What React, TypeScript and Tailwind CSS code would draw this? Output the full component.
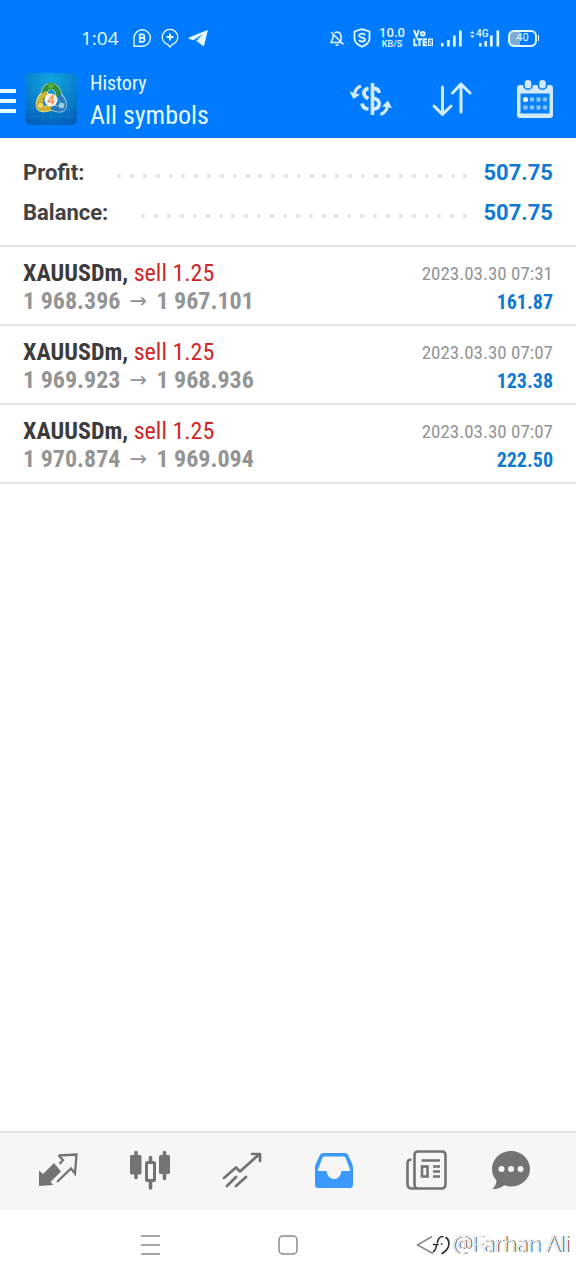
import React from 'react';

const condensed = "font-['Roboto_Condensed','Liberation_Sans_Narrow',Roboto,sans-serif]";

const deals = [
  { symbol: 'XAUUSDm', side: 'sell 1.25', open: '1 968.396', close: '1 967.101', time: '2023.03.30 07:31', profit: '161.87' },
  { symbol: 'XAUUSDm', side: 'sell 1.25', open: '1 969.923', close: '1 968.936', time: '2023.03.30 07:07', profit: '123.38' },
  { symbol: 'XAUUSDm', side: 'sell 1.25', open: '1 970.874', close: '1 969.094', time: '2023.03.30 07:07', profit: '222.50' },
];

function StatusBar() {
  return (
    <div className="flex h-[60px] items-center justify-between pt-4 pr-[37px] pl-[81px]">
      <div className="flex items-center gap-[9px]">
        <span className="mr-1 font-['Open_Sans',sans-serif] text-[19px] leading-6">1:04</span>
        <svg width="20" height="20" viewBox="0 0 20 20" fill="none" stroke="currentColor" strokeWidth="1.4">
          <path d="M2 18.2V10a8.2 8.2 0 1 1 8.2 8.2Z" strokeLinejoin="round" />
          <path d="M7.8 6.4v7.4h3.1a2 2 0 0 0 .3-3.900 1.800 1.800 0 0 0-.6-3.500ZM7.800 9.900h3" strokeWidth="1.8" />
        </svg>
        <svg width="18" height="20" viewBox="0 0 18 20" fill="none" stroke="currentColor" strokeWidth="1.3">
          <path d="M6.8 16.5A7.7 7.7 0 1 1 11.200 16.500L9 19Z" strokeLinejoin="round" />
          <path d="M9 5.600v6.800M5.600 9h6.800" strokeWidth="1.900" />
        </svg>
        <svg width="20" height="18" viewBox="0 0 20 18" fill="currentColor">
          <path d="M19 1.300.8 8.600c-.6.3-.5.900.1 1.100l4.700 1.500L15.300 4.600 8.300 11.800l.1.200 6.400 4.800c.6.400 1.200.2 1.400-.6L19.600 2c.1-.6-.1-.9-.6-.7Z" />
        </svg>
      </div>
      <div className="flex items-center gap-2">
        <svg className="mr-px" width="14" height="16" viewBox="0 0 14 16" fill="none" stroke="currentColor" strokeWidth="1.500" strokeLinecap="round">
          <path d="M5 2.500a4 4 0 0 1 6 3.500v4M3.300 5.200 3 8 1 12.500h9.500M6 14.900h2M1.500 2.500 13 14" />
        </svg>
        <svg width="18" height="20" viewBox="0 0 18 20" fill="none" stroke="currentColor" strokeWidth="1.800">
          <path d="M9 1.200 16.500 3.500v7c0 4-3.500 6.500-7.500 8.300-4-1.800-7.500-4.300-7.500-8.300v-7Z" strokeLinejoin="round" />
          <path d="M12 7.200c-.4-1-1.500-1.600-3-1.600-1.800 0-2.900.7-2.900 2 0 2.700 5.900 1.300 5.900 4 0 1.300-1.200 2-3 2-1.500 0-2.700-.6-3.100-1.700" strokeWidth="1.700" />
        </svg>
        <div className="flex w-[26px] flex-col items-center font-[Roboto,sans-serif] font-medium">
          <span className="text-[13px] leading-3">10.0</span>
          <span className="text-[9px] leading-[10px]">KB/S</span>
        </div>
        <svg width="20" height="18" viewBox="0 0 20 18" fill="none" stroke="currentColor" strokeWidth="2">
          <path d="m1 1 2.500 6.500L6 1M8 4.800a1.800 1.800 0 1 0 3.600 0 1.800 1.800 0 0 0-3.600 0M1.300 9.500v6.800h3M4 10.300h5M6.500 10.300V17M14 10.300h-3.400v6H14M10.600 13.300H14" />
          <path d="M15 9.500h5V17h-5Z" fill="currentColor" stroke="none" />
          <path d="M16 11.300h2.500v2H16.500v2h2.500" stroke="#007aff" strokeWidth="1" />
        </svg>
        <svg width="21" height="18" viewBox="0 0 21 18" fill="currentColor">
          <path d="M0 14h2.500v3.500H0zM6 11h2.700v6.500H6zM12 6.500h2.700v11H12zM18 1.500h2.700v16H18z" />
        </svg>
        <div className="relative h-[18px] w-[30px]">
          <svg width="30" height="18" viewBox="0 0 30 18" fill="currentColor">
            <path d="M0 4.500 2.300 2l2.300 2.500ZM0 6.500 2.300 9l2.300-2.500ZM9 14h2.500v3.500H9zM14.500 12h2.500v5.500h-2.500zM20 6.500h2.700v11H20zM26.500 1.500h2.700v16h-2.700z" />
          </svg>
          <span className="absolute top-0 left-[6px] font-[Roboto,sans-serif] text-[10px] leading-[10px] font-medium">4G</span>
        </div>
        <div className="flex items-center gap-px">
          <div className="flex h-[17px] w-[29px] items-center justify-center rounded-md border-2 border-current bg-linear-to-r from-[#7faed4] from-40% to-transparent to-40% font-[Roboto,sans-serif] text-[11px] leading-3">
            40
          </div>
          <div className="h-[6px] w-px bg-current" />
        </div>
      </div>
    </div>
  );
}

function AppLogo() {
  return (
    <svg width="52" height="52" viewBox="0 0 52 52" aria-hidden="true">
      <defs>
        <radialGradient id="tile" cx="50%" cy="15%" r="90%">
          <stop offset="0" stopColor="#0fa6e2" />
          <stop offset="1" stopColor="#035fba" />
        </radialGradient>
      </defs>
      <rect width="52" height="52" rx="5" fill="url(#tile)" />
      <path d="M8.500 0v52M17 0v52M26 0v52M35 0v52M43.500 0v52M0 8.500h52M0 17h52M0 26h52M0 35h52M0 43.500h52" stroke="#2eaee0" strokeOpacity=".12" />
      <g fill="none" strokeWidth="6.500">
        <path d="M19 27c-1-8 1-13 7-14 6 1 8.500 6 7.500 13" stroke="#b5dc8c" />
        <path d="M23 19c-6 2-9.500 8-9 14 1 4 7 3.500 12 1.500" stroke="#e9e48a" />
        <path d="M33.500 22c4 3 5.500 7 5 12-1.500 3.500-7 2.500-12 0" stroke="#a3d2ee" />
      </g>
      <g fill="none" strokeWidth="5">
        <path d="M19 27c-1-8 1-13 7-14 6 1 8.500 6 7.500 13" stroke="#2f8a4c" />
        <path d="M22 20c-5 2-8.500 7-8 13 1 4 7 3.500 12 1.500" stroke="#cdb335" />
        <path d="M33.500 23c4 3 5.500 6 5 11-1.500 3.500-7 2.500-12 0" stroke="#2b79bd" />
      </g>
      <circle cx="26" cy="13" r="3.300" fill="#55b43c" stroke="#28743b" strokeWidth=".6" />
      <circle cx="15.500" cy="32.500" r="3.300" fill="#f0d46c" stroke="#9d8020" strokeWidth=".6" />
      <circle cx="36.500" cy="32.500" r="3.300" fill="#9dd2ef" stroke="#215f96" strokeWidth=".6" />
      <circle cx="26" cy="27" r="6.500" fill="#fbf6ee" />
      <path d="M27.500 31.500v-9L23 28.800h6.500" fill="none" stroke="#f28b58" strokeWidth="1.400" />
    </svg>
  );
}

function AppBar() {
  return (
    <div className="flex h-[78px] items-center pr-[22px]">
      <button type="button" aria-label="Open menu" className="mt-1 flex w-4 flex-col gap-[6px]">
        <span className="h-1 w-full bg-current" />
        <span className="h-1 w-full bg-current" />
        <span className="h-1 w-full bg-current" />
      </button>
      <div className="ml-[9px]">
        <AppLogo />
      </div>
      <div className={`ml-[13px] flex flex-1 flex-col pt-1 ${condensed}`}>
        <span className="text-[20px] leading-7">History</span>
        <h1 className="text-[26px] leading-9">All symbols</h1>
      </div>
      <div className="flex items-center text-[#d3ebff]">
        <button type="button" aria-label="Currency">
          <svg width="44" height="36" viewBox="0 0 44 36" fill="none" stroke="currentColor" strokeWidth="3.800">
            <path d="M23.500 2v32" strokeWidth="3.600" />
            <path d="M30 12c0-3-1.800-4.600-5.500-4.600M19.500 7.300c-3.200.7-4.600 2.600-4.600 5s1.600 4 4.600 5.200M24.500 17c3.800 1 5.600 2.800 5.600 5.600 0 3.400-2.200 5.400-5.600 5.600M13 22.500c.5 3.300 2.700 5.200 6.500 5.700" />
            <path d="M12 5C8.200 6.500 6.300 8.700 5.800 12M31.500 33.500c4-1.500 6.300-4 6.800-8" strokeWidth="3" />
            <path d="m.5 10.500 10.500 3L4.500 18ZM33 25.500l6-6 4 7.500Z" fill="currentColor" stroke="none" />
          </svg>
        </button>
        <button type="button" aria-label="Sort" className="mr-11 ml-[39px]">
          <svg width="40" height="36" viewBox="0 0 40 36" fill="none" stroke="currentColor" strokeWidth="3" strokeLinecap="round" strokeLinejoin="round">
            <path d="M10.500 6v27M2 25l8.500 8.500L19 25M29 31V3M20.500 12 29 3l9 9" />
          </svg>
        </button>
        <button type="button" aria-label="Select period">
          <svg width="38" height="40" viewBox="0 0 38 40" fill="none">
            <path d="M4 6h30a3 3 0 0 1 3 3v27a3 3 0 0 1-3 3H4a3 3 0 0 1-3-3V9a3 3 0 0 1 3-3Z" fill="currentColor" />
            <path d="M4.500 14.500h29v20h-29Z" fill="#0a7ffb" />
            <rect x="7" y="-1" width="10" height="12" rx="5" fill="#007aff" />
            <rect x="21.500" y="-1" width="10" height="12" rx="5" fill="#007aff" />
            <rect x="8.700" y="1" width="6.600" height="8.500" rx="3.300" fill="currentColor" />
            <rect x="23.200" y="1" width="6.600" height="8.500" rx="3.300" fill="currentColor" />
            <circle cx="9.500" cy="20.500" r="2.600" fill="#e4f7ff" />
            <g fill="#7fc0fb">
              <circle cx="16" cy="20.500" r="2.400" />
              <circle cx="22.500" cy="20.500" r="2.400" />
              <circle cx="29" cy="20.500" r="2.400" />
              <circle cx="9.500" cy="28.500" r="2.400" />
              <circle cx="16" cy="28.500" r="2.400" />
              <circle cx="22.500" cy="28.500" r="2.400" />
              <circle cx="29" cy="28.500" r="2.400" />
            </g>
          </svg>
        </button>
      </div>
    </div>
  );
}

function Total({ label, value, dots }: { label: string; value: string; dots: number }) {
  return (
    <div className="flex h-10 items-center text-[22px] leading-7 font-bold">
      <dt className="text-[#424242]">{label}</dt>
      <div className="mt-1.5 mr-4 ml-[33px] flex flex-1 justify-between" aria-hidden="true">
        {Array.from({ length: dots }, (_, i) => (
          <span key={i} className="size-1 rounded-full bg-[#e0e0e0]" />
        ))}
      </div>
      <dd className="text-[#0f7ad2]">{value}</dd>
    </div>
  );
}

function BottomNav() {
  const cell = 'flex flex-[92] items-center justify-center';
  return (
    <nav className="flex h-[79px] border-t-2 border-[#e4e4e4] bg-[#f6f6f6] pr-[26px] pb-1 pl-3 text-[#737373]">
      <button type="button" aria-label="Quotes" className={cell}>
        <svg width="40" height="36" viewBox="0 0 40 36" fill="none">
          <path d="M1 18.500v15.500l14.500-1-3-3L23 19.500 16 11 5 22Z" fill="currentColor" />
          <path d="m20.500 3.500 18-1-1.500 19-4-5L19 30M20.500 3.500l4.500 4.500-3.500 4" stroke="currentColor" strokeWidth="2.300" />
        </svg>
      </button>
      <button type="button" aria-label="Charts" className={cell}>
        <svg width="40" height="40" viewBox="0 0 40 40" fill="none" stroke="currentColor">
          <path d="M6 2.500v25M34.500 2.500v26M20.500 7.500v5M20.500 31v7" strokeWidth="3.600" strokeLinecap="round" />
          <rect x="0" y="5" width="11.500" height="19.500" rx="1.500" fill="currentColor" stroke="none" />
          <rect x="29" y="5" width="11" height="19" rx="1.500" fill="currentColor" stroke="none" />
          <rect x="16.500" y="12.500" width="8" height="18" rx="1" strokeWidth="3" />
        </svg>
      </button>
      <button type="button" aria-label="Trade" className={cell}>
        <svg width="40" height="36" viewBox="0 0 40 36" fill="none" stroke="currentColor" strokeWidth="2.700" strokeLinecap="round" strokeLinejoin="round">
          <path d="m2 26 12-10.500 4 4L37 2.500M30 2h8v7M5 34l9-9M14 34l10-9" />
        </svg>
      </button>
      <button type="button" aria-label="History" aria-current="page" className={`${cell} text-[#3b99fc]`}>
        <svg width="40" height="36" viewBox="0 0 40 36">
          <path d="M9.500 1h21c2 0 3 .8 3.800 2.500l3.700 8c.7 1.500 1 3 1 4.500v17a3 3 0 0 1-3 3H4a3 3 0 0 1-3-3V16c0-1.500.3-3 1-4.500l3.700-8C6.500 1.800 7.500 1 9.500 1Z" fill="currentColor" />
          <path d="M11 4.500h18c1.500 0 2.300.6 2.900 2L36 17.500c.3.900-.1 1.500-1 1.500h-7.500c-.8 5-3.500 8-7.500 8s-6.700-3-7.500-8H5c-.9 0-1.300-.6-1-1.500L8.100 6.500c.6-1.400 1.400-2 2.900-2Z" fill="#f6f6f6" />
        </svg>
      </button>
      <button type="button" aria-label="News" className={cell}>
        <svg width="42" height="40" viewBox="0 0 42 40" fill="none" stroke="currentColor" strokeWidth="2.600">
          <path d="M6.500 9.500C3 9.500 2.500 11 2.500 14v20c0 3 1.500 4.500 4.500 4.500h29.500c3 0 4-1.500 4-4.500V5c0-2.500-1-3.500-3.500-3.500H13c-2.500 0-3.500 1-3.500 3.500v29c0 3 1 4.500 3.500 4.500" />
          <path d="M16.500 10.500H35M28 16.500h7M28 21.500h7M28 26.500h7" />
          <rect x="17" y="16.500" width="5.500" height="10" />
        </svg>
      </button>
      <button type="button" aria-label="Messages" className="flex flex-[78] items-center justify-center">
        <svg width="40" height="40" viewBox="0 0 40 40">
          <path d="M20 1c10.500 0 19 8 19 18s-8.500 17.500-19 17.500c-2.500 0-4.700-.4-6.800-1.200C10 38 5.500 39.500 1.200 39c2.800-2 4-5 4.300-8.500C2.600 27.500 1 23.500 1 19 1 9 9.500 1 20 1Z" fill="currentColor" />
          <g fill="#f6f6f6">
            <circle cx="10.500" cy="19" r="3" />
            <circle cx="20" cy="19" r="3" />
            <circle cx="29.500" cy="19" r="3" />
          </g>
        </svg>
      </button>
    </nav>
  );
}

function SystemNav() {
  return (
    <footer className="relative flex h-[70px] items-center justify-between bg-white pr-[142px] pl-[141px] text-[#8a8a8a]">
      <button type="button" aria-label="Recent apps">
        <svg width="19" height="20" viewBox="0 0 19 20" stroke="currentColor" strokeWidth="1.500">
          <path d="M0 1h19M0 10h19M0 19h19" />
        </svg>
      </button>
      <button type="button" aria-label="Home">
        <svg width="20" height="20" viewBox="0 0 20 20" fill="none" stroke="currentColor" strokeWidth="1.500">
          <rect x="1" y="1" width="18" height="18" rx="4" />
        </svg>
      </button>
      <button type="button" aria-label="Back">
        <svg width="18" height="20" viewBox="0 0 18 20" fill="none" stroke="currentColor" strokeWidth="1.500">
          <path d="M16 1.500 1.500 10 17 18.500" />
        </svg>
      </button>
      <div className="absolute top-[17px] right-[6px] flex items-center gap-[3px]">
        <svg className="mt-1" width="18" height="22" viewBox="0 0 18 22" fill="none" strokeLinecap="round">
          <path d="M1.500 10.500h4.500M4.500 11c-.3 3-1.500 5.500-3 6.500M5.500 8.500C6 4.500 8 2.500 11 2.500M14 3.500c3 2 3.500 6 2 10-1.200 2.800-3.500 4.800-6 6M9.500 10h.5" stroke="#2c2c2c" strokeWidth="1.600" />
        </svg>
        <span className="font-['Open_Sans',sans-serif] text-[22px] leading-8 font-light whitespace-nowrap text-white [text-shadow:1px_0_0_#444,0_0_1px_#777]">
          @Farhan Ali
        </span>
      </div>
    </footer>
  );
}

export default function App() {
  return (
    <div className="flex min-h-screen flex-col bg-white font-[Roboto,'Liberation_Sans',sans-serif]">
      <header className="bg-[#007aff] text-[#e4fbff]">
        <StatusBar />
        <AppBar />
      </header>
      <main className="flex-1">
        <dl className="border-b-2 border-[#e4e4e4] px-[23px] pt-[15px] pb-3">
          <Total label="Profit:" value="507.75" dots={28} />
          <Total label="Balance:" value="507.75" dots={26} />
        </dl>
        <ul className={condensed}>
          {deals.map((deal) => (
            <li key={deal.open} className="flex h-[79px] items-center justify-between border-b-2 border-[#e4e4e4] px-[23px] pt-0.5">
              <div className="text-[24px] leading-7">
                <p className="text-[#d02626]">
                  <b className="text-[#3c3c3c]">{deal.symbol},</b> {deal.side}
                </p>
                <p className="flex font-bold text-[#949494]">
                  <span>{deal.open}</span>
                  <span className="w-9 text-center font-['DejaVu_Sans',sans-serif] text-[21px] font-normal">→</span>
                  <span>{deal.close}</span>
                </p>
              </div>
              <div className="pt-0.5 text-right leading-7">
                <p className="text-[19px] text-[#949494]">{deal.time}</p>
                <p className="text-[20px] font-bold text-[#0f7ad2]">{deal.profit}</p>
              </div>
            </li>
          ))}
        </ul>
      </main>
      <BottomNav />
      <SystemNav />
    </div>
  );
}
